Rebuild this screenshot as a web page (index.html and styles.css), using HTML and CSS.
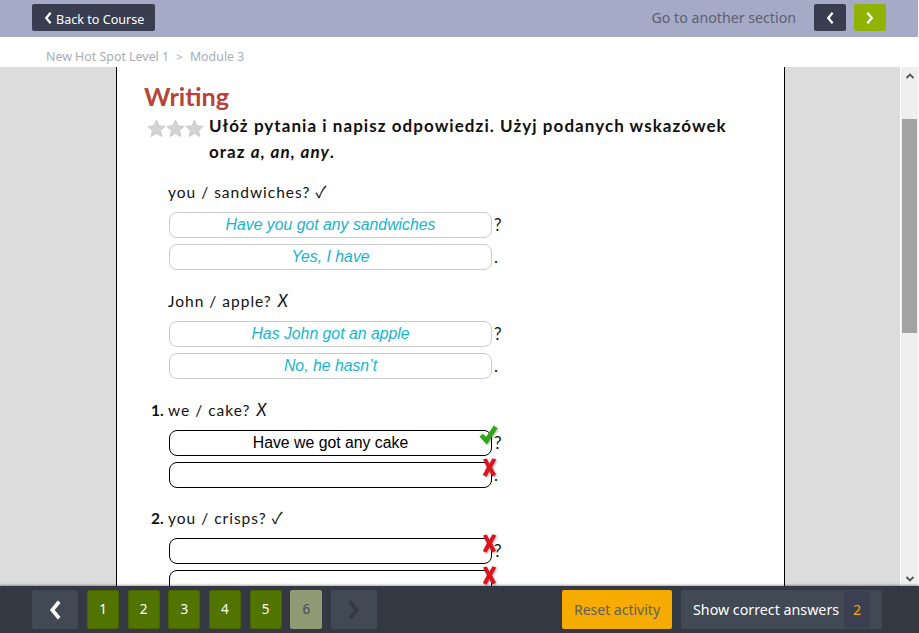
FILE: index.html
```html
<!DOCTYPE html>
<html lang="pl">
<head>
<meta charset="utf-8">
<title>Writing</title>
<link rel="stylesheet" href="styles.css">
</head>
<body>
<svg class="defs" width="0" height="0" aria-hidden="true">
  <defs>
    <symbol id="chev-l" viewBox="0 0 10 16"><path d="M8 2 3 8l5 6" fill="none" stroke="currentColor" stroke-width="2.6"/></symbol>
    <symbol id="chev-r" viewBox="0 0 10 16"><path d="M2 2l5 6-5 6" fill="none" stroke="currentColor" stroke-width="2.6"/></symbol>
    <symbol id="star" viewBox="0 0 20 20"><path d="M10 1.2l2.7 5.9 6.4.7-4.8 4.3 1.4 6.4-5.7-3.3-5.7 3.3 1.4-6.4L.9 7.8l6.4-.7z" fill="#d4d4d4" stroke="#c4c4c4" stroke-width=".8"/></symbol>
    <symbol id="bad" viewBox="0 0 15 19"><path d="M1 1.500 4.800.5 7.300 5.800 10.500.3 14.300 1.600 10 9.200l4 7.600-4 1.700-2.500-5.200-3 5.400L.8 17l4-7.700z" fill="#d9161f"/></symbol>
    <symbol id="good" viewBox="0 0 19 20"><path d="M.5 11.500 4 8.700 7 12 14.800.5 18.500 3.200 7.800 19.500z" fill="#2fa614"/></symbol>
  </defs>
</svg>
<header class="topbar">
  <a class="back-btn"><svg class="ico-sm"><use href="#chev-l"/></svg><span class="back-text">Back to Course</span></a>
  <div class="section-nav">
    <span class="section-label">Go to another section</span>
    <a class="sq-btn dark"><svg class="ico-sm"><use href="#chev-l"/></svg></a>
    <a class="sq-btn lime"><svg class="ico-sm"><use href="#chev-r"/></svg></a>
  </div>
</header>
<nav class="crumbs">New Hot Spot Level 1 <span class="sep">&gt;</span> Module 3</nav>
<main class="stage">
  <div class="canvas">
    <article class="sheet">
      <h1 class="title">Writing</h1>
      <div class="instruction">
        <div class="stars">
          <svg class="star"><use href="#star"/></svg><svg class="star"><use href="#star"/></svg><svg class="star"><use href="#star"/></svg>
        </div>
        <p class="instr-text">Ułóż pytania i napisz odpowiedzi. Użyj podanych wskazówek oraz <em>a, an, any</em>.</p>
      </div>

      <section class="item first">
        <p class="prompt">you / sandwiches? <span class="sym">✓</span></p>
        <div class="row"><div class="box model">Have you got any sandwiches</div><span class="punct">?</span></div>
        <div class="row"><div class="box model">Yes, I have</div><span class="punct">.</span></div>
      </section>
      <section class="item">
        <p class="prompt">John / apple? <i class="sym-x">X</i></p>
        <div class="row"><div class="box model">Has John got an apple</div><span class="punct">?</span></div>
        <div class="row"><div class="box model">No, he hasn’t</div><span class="punct">.</span></div>
      </section>
      <section class="item">
        <p class="prompt"><b class="num">1.</b>we / cake? <i class="sym-x">X</i></p>
        <div class="row"><div class="box user">Have we got any cake</div><span class="punct">?</span><svg class="mark good"><use href="#good"/></svg></div>
        <div class="row"><div class="box user"></div><span class="punct">.</span><svg class="mark bad"><use href="#bad"/></svg></div>
      </section>
      <section class="item">
        <p class="prompt"><b class="num">2.</b>you / crisps? <span class="sym">✓</span></p>
        <div class="row"><div class="box user"></div><span class="punct">?</span><svg class="mark bad"><use href="#bad"/></svg></div>
        <div class="row"><div class="box user"></div><span class="punct">.</span><svg class="mark bad"><use href="#bad"/></svg></div>
      </section>
    </article>
  </div>
  <div class="scrollbar">
    <svg class="sb-arrow" viewBox="0 0 10 6"><path d="M1.500 5 5 1.500 8.500 5" fill="none" stroke="#555" stroke-width="1.800"/></svg>
    <div class="sb-track"><div class="sb-thumb"></div></div>
    <svg class="sb-arrow down" viewBox="0 0 10 6"><path d="M1.500 1 5 4.500 8.500 1" fill="none" stroke="#555" stroke-width="1.800"/></svg>
  </div>
</main>
<footer class="bottombar">
  <a class="nav-btn"><svg class="ico-lg"><use href="#chev-l"/></svg></a>
  <ol class="pages">
    <li class="page">1</li><li class="page">2</li><li class="page">3</li><li class="page">4</li><li class="page">5</li><li class="page current">6</li>
  </ol>
  <a class="nav-btn off"><svg class="ico-lg"><use href="#chev-r"/></svg></a>
  <div class="actions">
    <a class="reset">Reset activity</a>
    <a class="show">Show correct answers<span class="count">2</span></a>
  </div>
</footer>
</body>
</html>
```
FILE: styles.css
```css
* { box-sizing: border-box; }
html, body { margin: 0; height: 100%; }
body {
  width: 919px;
  height: 633px;
  overflow: hidden;
  display: flex;
  flex-direction: column;
  background: #fff;
  font-family: "Noto Sans", "Open Sans", sans-serif;
}
.defs { position: absolute; }
.topbar {
  height: 37px;
  width: 918px;
  flex: none;
  background: #a5abc6;
  display: flex;
  align-items: flex-start;
  justify-content: space-between;
  padding: 4px 32px 0 32px;
}
.back-btn {
  width: 123px;
  height: 27px;
  background: #383d50;
  border-radius: 2px;
  color: #fff;
  font-size: 12.600px;
  display: flex;
  align-items: center;
  padding-left: 11px;
}
.back-text { margin-top: 3px; }
.ico-sm { width: 10px; height: 14px; margin-right: 3px; flex: none; }
.section-nav { display: flex; align-items: center; }
.section-label { color: #5c6070; font-size: 14.200px; margin: 0 18px 0 0; }
.sq-btn {
  width: 32px;
  height: 27px;
  border-radius: 2px;
  color: #fff;
  display: flex;
  align-items: center;
  justify-content: center;
}
.sq-btn .ico-sm { margin: 0; }
.dark { background: #383d50; margin-right: 8px; }
.lime { background: #8fb300; }
.crumbs {
  height: 30px;
  flex: none;
  padding: 11px 0 0 46px;
  font-size: 12.400px;
  line-height: 18px;
  color: #a9adb3;
}
.sep { margin: 0 4px; font-size: 11px; }
.stage { height: 519px; flex: none; display: flex; overflow: hidden; }
.canvas {
  width: 900px;
  flex: none;
  background: #dcdcdc;
  overflow: hidden;
  padding-left: 116px;
}
.sheet {
  width: 669px;
  height: 519px;
  background: #fff;
  border-left: 1px solid #000;
  border-right: 1px solid #000;
  padding: 15px 0 0 27px;
  font-family: Lato, sans-serif;
  color: #111;
  overflow: hidden;
}
.title {
  margin: 0;
  font-size: 25.300px;
  line-height: 28px;
  font-weight: 700;
  color: #b5453a;
}
.instruction { display: flex; margin-top: 3px; }
.stars { width: 65px; flex: none; display: flex; padding: 6px 0 0 3px; }
.star { width: 19px; height: 19px; flex: none; }
.instr-text {
  margin: 0;
  width: 530px;
  font-size: 17px;
  line-height: 26px;
  font-weight: 700;
  letter-spacing: 1.050px;
  color: #111;
}
.instr-text em { font-style: italic; }
.item { margin-top: 18.420px; }
.item.first { margin-top: 15.200px; }
.prompt {
  margin: 0 0 8px 24px;
  font-size: 15.500px;
  line-height: 24px;
  letter-spacing: 1px;
}
.sym { font-family: "Noto Sans CJK JP", "DejaVu Sans", sans-serif; font-size: 16px; line-height: 1; }
.sym-x { font-family: Lato, sans-serif; font-weight: 400; font-style: italic; font-size: 16.500px; line-height: 1; color: #111; margin-left: 1px; }
.num { display: inline-block; margin-left: -17px; width: 17px; letter-spacing: 0; font-weight: 700; }
.row { display: flex; margin: 0 0 6.250px 25px; position: relative; height: 26px; }
.box {
  width: 323px;
  height: 26px;
  border-radius: 8px;
  text-align: center;
  font-family: "Liberation Sans", Arial, sans-serif;
  font-size: 15.800px;
  line-height: 24px;
}
.model { border: 1px solid #ccc; color: #17b4cd; font-style: italic; }
.user { border: 1px solid #000; color: #000; }
.punct { margin-left: 2px; font-size: 17px; line-height: 25px; color: #111; }
.mark { position: absolute; }
.good { width: 19px; height: 20px; left: 310px; top: -5px; filter: drop-shadow(1px 1px 1px rgba(0,0,0,.3)); }
.bad { width: 15px; height: 19px; left: 313px; top: -4px; filter: drop-shadow(1px 1px 1px rgba(0,0,0,.3)); }
.scrollbar {
  width: 17px;
  flex: none;
  margin-left: 1px;
  background: #efefef;
  display: flex;
  flex-direction: column;
  align-items: center;
}
.sb-arrow { width: 10px; height: 6px; margin: 6px 0; flex: none; }
.sb-arrow.down { margin: 6px 0 4px; }
.sb-track { flex: 1; width: 100%; padding-top: 34px; }
.sb-thumb { width: 15px; height: 214px; background: #a3a3a3; margin-left: 1px; }
.bottombar {
  height: 47px;
  flex: none;
  background: #333842;
  display: flex;
  align-items: flex-start;
  padding: 4px 37px 0 32px;
  box-shadow: 0 -1px 2px rgba(0,0,0,.35);
  position: relative;
  color: #fff;
}
.nav-btn {
  width: 46px;
  height: 39px;
  background: #414955;
  border-radius: 2px;
  color: #fff;
  display: flex;
  align-items: center;
  justify-content: center;
  flex: none;
}
.nav-btn.off { color: #333842; }
.ico-lg { width: 14px; height: 22px; }
.pages { list-style: none; margin: 0 8.670px 0 9px; padding: 0; display: flex; gap: 8.670px; }
.page {
  width: 32px;
  height: 39px;
  background: #517300;
  border: 1px solid #476300;
  border-radius: 2px;
  font-size: 13.500px;
  line-height: 37px;
  text-align: center;
}
.page.current { background: #8f9a75; border-color: #8f9a75; color: #464b52; }
.actions { margin-left: auto; display: flex; gap: 9px; }
.reset {
  width: 110px;
  height: 39px;
  background: #f5ab00;
  border-radius: 2px;
  color: #5f6062;
  font-size: 14px;
  line-height: 39px;
  text-align: center;
}
.show {
  width: 201px;
  height: 39px;
  background: #414955;
  border-radius: 2px;
  font-size: 14.250px;
  line-height: 39px;
  padding-left: 12px;
  display: flex;
  position: relative;
}
.count {
  position: absolute;
  left: 163px;
  top: 1px;
  width: 26px;
  height: 37px;
  line-height: 37px;
  background: #3a3f52;
  color: #f5ab00;
  text-align: center;
}
```
